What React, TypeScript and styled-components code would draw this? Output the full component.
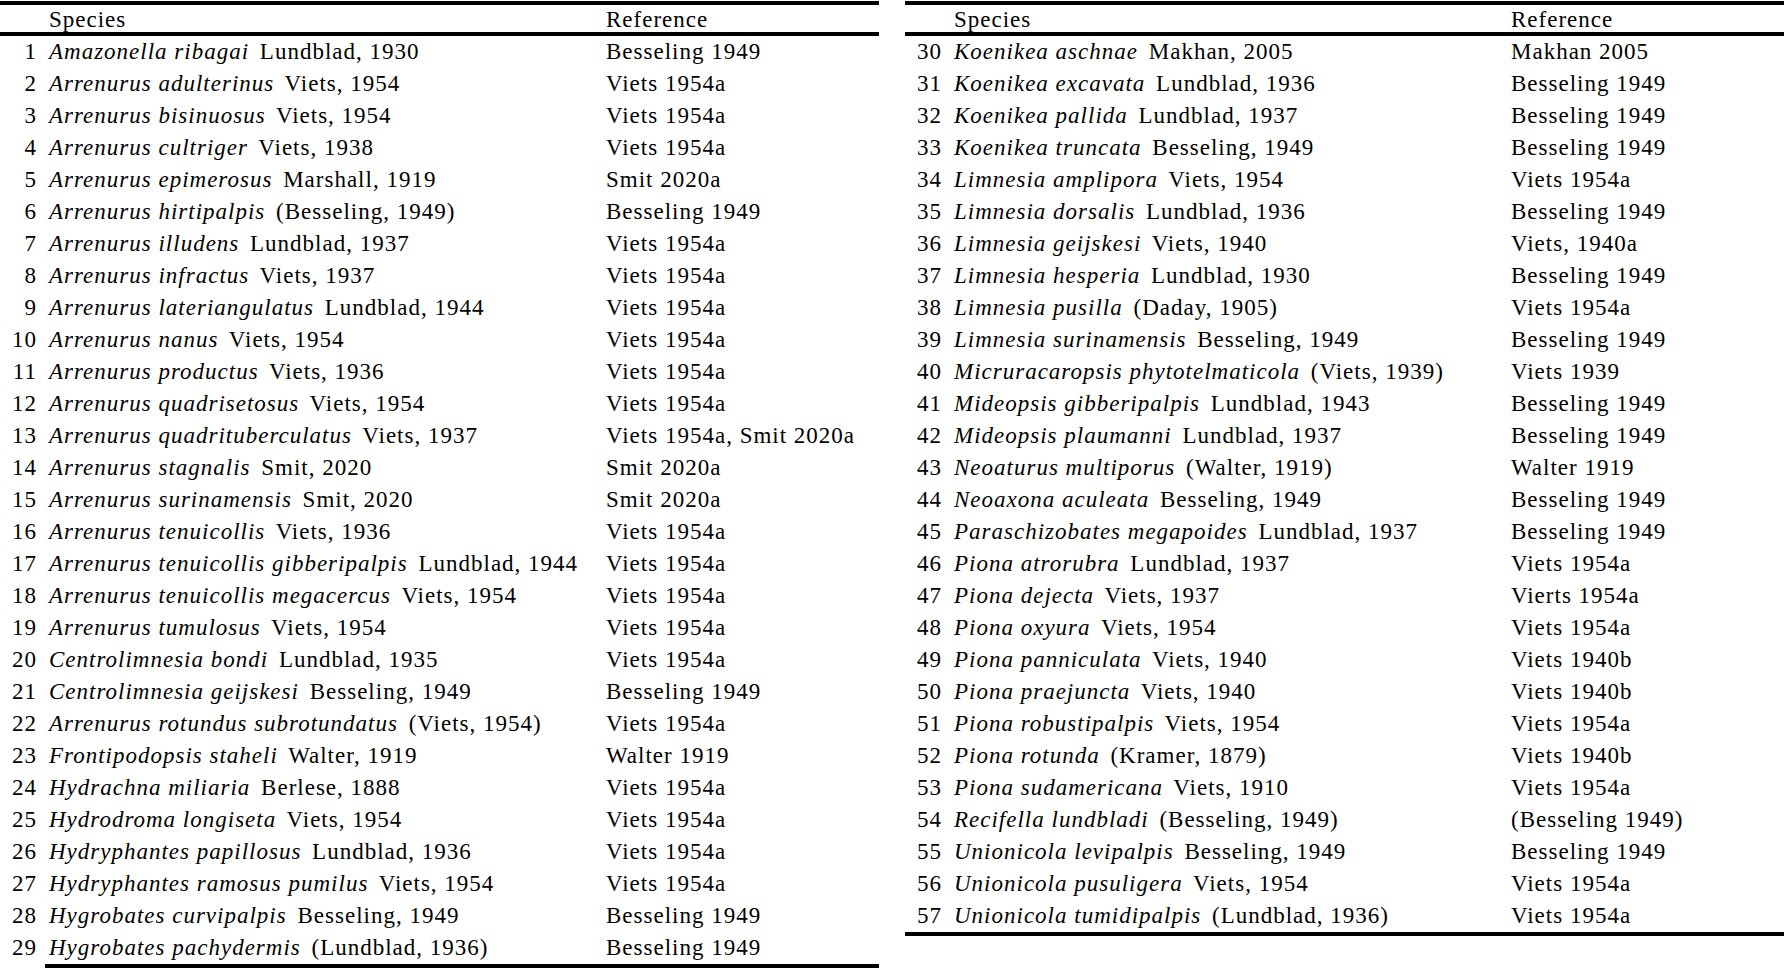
import React from "react";
import styled, { createGlobalStyle } from "styled-components";

const GlobalStyle = createGlobalStyle`
  html, body { margin: 0; padding: 0; background: #ffffff; }
  body {
    font-family: "Liberation Serif", "Times New Roman", "DejaVu Serif", serif;
    color: #000000;
  }
`;

type Entry = [number, string, string, string];

const left: Entry[] = [
  [1, "Amazonella ribagai", "Lundblad, 1930", "Besseling 1949"],
  [2, "Arrenurus adulterinus", "Viets, 1954", "Viets 1954a"],
  [3, "Arrenurus bisinuosus", "Viets, 1954", "Viets 1954a"],
  [4, "Arrenurus cultriger", "Viets, 1938", "Viets 1954a"],
  [5, "Arrenurus epimerosus", "Marshall, 1919", "Smit 2020a"],
  [6, "Arrenurus hirtipalpis", "(Besseling, 1949)", "Besseling 1949"],
  [7, "Arrenurus illudens", "Lundblad, 1937", "Viets 1954a"],
  [8, "Arrenurus infractus", "Viets, 1937", "Viets 1954a"],
  [9, "Arrenurus lateriangulatus", "Lundblad, 1944", "Viets 1954a"],
  [10, "Arrenurus nanus", "Viets, 1954", "Viets 1954a"],
  [11, "Arrenurus productus", "Viets, 1936", "Viets 1954a"],
  [12, "Arrenurus quadrisetosus", "Viets, 1954", "Viets 1954a"],
  [13, "Arrenurus quadrituberculatus", "Viets, 1937", "Viets 1954a, Smit 2020a"],
  [14, "Arrenurus stagnalis", "Smit, 2020", "Smit 2020a"],
  [15, "Arrenurus surinamensis", "Smit, 2020", "Smit 2020a"],
  [16, "Arrenurus tenuicollis", "Viets, 1936", "Viets 1954a"],
  [17, "Arrenurus tenuicollis gibberipalpis", "Lundblad, 1944", "Viets 1954a"],
  [18, "Arrenurus tenuicollis megacercus", "Viets, 1954", "Viets 1954a"],
  [19, "Arrenurus tumulosus", "Viets, 1954", "Viets 1954a"],
  [20, "Centrolimnesia bondi", "Lundblad, 1935", "Viets 1954a"],
  [21, "Centrolimnesia geijskesi", "Besseling, 1949", "Besseling 1949"],
  [22, "Arrenurus rotundus subrotundatus", "(Viets, 1954)", "Viets 1954a"],
  [23, "Frontipodopsis staheli", "Walter, 1919", "Walter 1919"],
  [24, "Hydrachna miliaria", "Berlese, 1888", "Viets 1954a"],
  [25, "Hydrodroma longiseta", "Viets, 1954", "Viets 1954a"],
  [26, "Hydryphantes papillosus", "Lundblad, 1936", "Viets 1954a"],
  [27, "Hydryphantes ramosus pumilus", "Viets, 1954", "Viets 1954a"],
  [28, "Hygrobates curvipalpis", "Besseling, 1949", "Besseling 1949"],
  [29, "Hygrobates pachydermis", "(Lundblad, 1936)", "Besseling 1949"],
];

const right: Entry[] = [
  [30, "Koenikea aschnae", "Makhan, 2005", "Makhan 2005"],
  [31, "Koenikea excavata", "Lundblad, 1936", "Besseling 1949"],
  [32, "Koenikea pallida", "Lundblad, 1937", "Besseling 1949"],
  [33, "Koenikea truncata", "Besseling, 1949", "Besseling 1949"],
  [34, "Limnesia amplipora", "Viets, 1954", "Viets 1954a"],
  [35, "Limnesia dorsalis", "Lundblad, 1936", "Besseling 1949"],
  [36, "Limnesia geijskesi", "Viets, 1940", "Viets, 1940a"],
  [37, "Limnesia hesperia", "Lundblad, 1930", "Besseling 1949"],
  [38, "Limnesia pusilla", "(Daday, 1905)", "Viets 1954a"],
  [39, "Limnesia surinamensis", "Besseling, 1949", "Besseling 1949"],
  [40, "Micruracaropsis phytotelmaticola", "(Viets, 1939)", "Viets 1939"],
  [41, "Mideopsis gibberipalpis", "Lundblad, 1943", "Besseling 1949"],
  [42, "Mideopsis plaumanni", "Lundblad, 1937", "Besseling 1949"],
  [43, "Neoaturus multiporus", "(Walter, 1919)", "Walter 1919"],
  [44, "Neoaxona aculeata", "Besseling, 1949", "Besseling 1949"],
  [45, "Paraschizobates megapoides", "Lundblad, 1937", "Besseling 1949"],
  [46, "Piona atrorubra", "Lundblad, 1937", "Viets 1954a"],
  [47, "Piona dejecta", "Viets, 1937", "Vierts 1954a"],
  [48, "Piona oxyura", "Viets, 1954", "Viets 1954a"],
  [49, "Piona panniculata", "Viets, 1940", "Viets 1940b"],
  [50, "Piona praejuncta", "Viets, 1940", "Viets 1940b"],
  [51, "Piona robustipalpis", "Viets, 1954", "Viets 1954a"],
  [52, "Piona rotunda", "(Kramer, 1879)", "Viets 1940b"],
  [53, "Piona sudamericana", "Viets, 1910", "Viets 1954a"],
  [54, "Recifella lundbladi", "(Besseling, 1949)", "(Besseling 1949)"],
  [55, "Unionicola levipalpis", "Besseling, 1949", "Besseling 1949"],
  [56, "Unionicola pusuligera", "Viets, 1954", "Viets 1954a"],
  [57, "Unionicola tumidipalpis", "(Lundblad, 1936)", "Viets 1954a"],
];

const Page = styled.div`
  display: flex;
  align-items: flex-start;
  gap: 26px;
  padding-top: 1px;
  width: 1785px;
  font-family: "Liberation Serif", "Times New Roman", "DejaVu Serif", serif;
  font-size: 23px;
  letter-spacing: 1px;
  color: #000;
`;

const TableBlock = styled.div`
  width: 879px;
  display: flex;
  flex-direction: column;
`;

const Rule = styled.div<{ $inset?: number }>`
  height: 4px;
  background: #000;
  margin-left: ${(p) => p.$inset ?? 0}px;
`;

const RowGrid = styled.div<{ $header?: boolean }>`
  display: grid;
  grid-template-columns: 45px 555px 1fr;
  height: ${(p) => (p.$header ? 27 : 32)}px;
  line-height: 24px;
  padding-top: ${(p) => (p.$header ? 3 : 4)}px;
  box-sizing: border-box;
  white-space: nowrap;
`;

const NumCell = styled.div`
  text-align: right;
  padding-right: 8px;
`;

const NameCell = styled.div`
  padding-left: 4px;
`;

const RefCell = styled.div`
  padding-left: 6px;
`;

const Taxon = styled.i`
  font-style: italic;
  margin-right: 4px;
`;

const Table: React.FC<{ rows: Entry[]; bottomInset: number }> = ({ rows, bottomInset }) => (
  <TableBlock>
    <Rule />
    <RowGrid $header>
      <NumCell />
      <NameCell>Species</NameCell>
      <RefCell>Reference</RefCell>
    </RowGrid>
    <Rule />
    {rows.map(([n, taxon, author, ref]) => (
      <RowGrid key={n}>
        <NumCell>{n}</NumCell>
        <NameCell>
          <Taxon>{taxon}</Taxon> {author}
        </NameCell>
        <RefCell>{ref}</RefCell>
      </RowGrid>
    ))}
    <Rule $inset={bottomInset} />
  </TableBlock>
);

export default function App() {
  return (
    <>
      <GlobalStyle />
      <Page>
        <Table rows={left} bottomInset={45} />
        <Table rows={right} bottomInset={0} />
      </Page>
    </>
  );
}
